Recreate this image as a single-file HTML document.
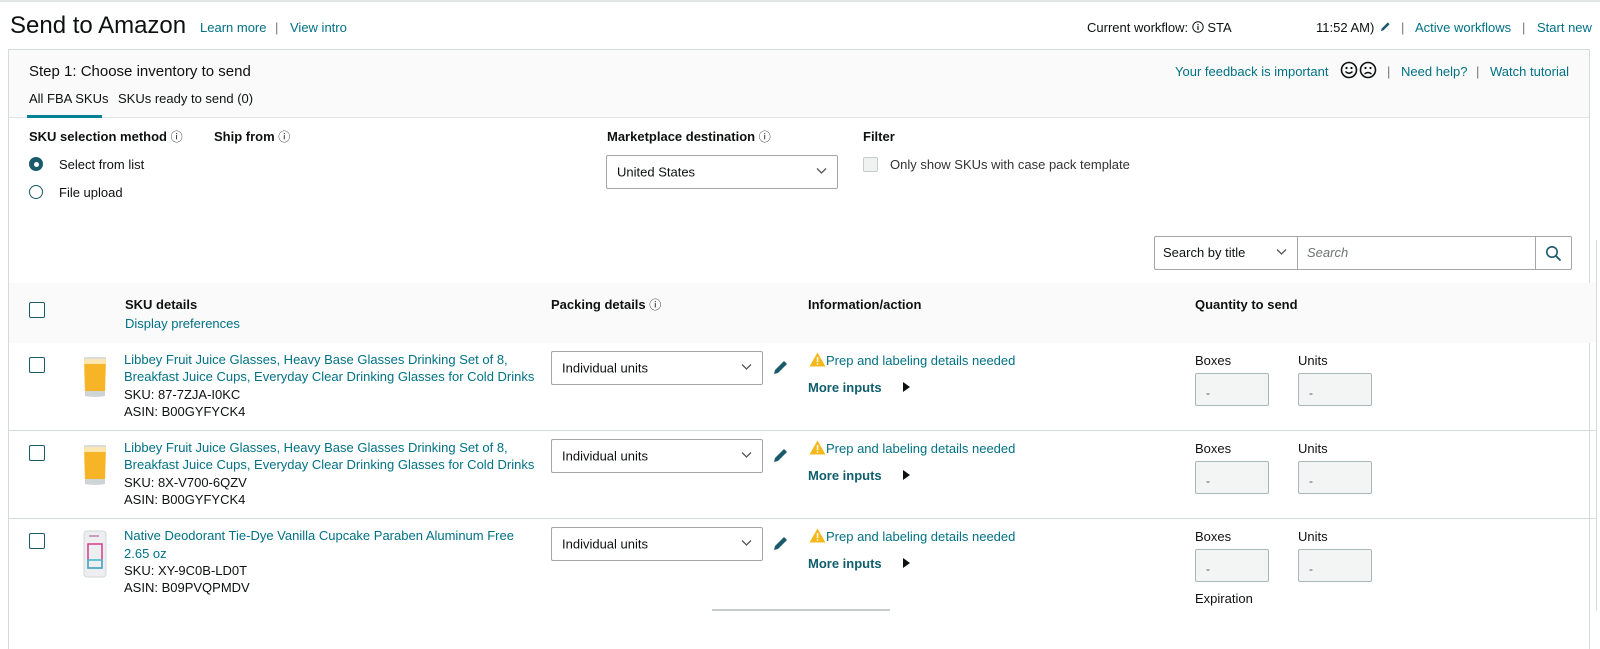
<!DOCTYPE html>
<html><head><meta charset="utf-8"><style>
*{box-sizing:border-box;margin:0;padding:0}
body{width:1600px;height:611px;overflow:hidden;background:#fff;font-family:"Liberation Sans",sans-serif;font-size:13px;color:#0f1111;position:relative}
.a{position:absolute;white-space:nowrap;line-height:1}
.l{color:#007185}
.b{font-weight:bold}
.sep{color:#767676}
.i{font-weight:normal;font-size:12px}
.cb{position:absolute;width:16px;height:16px;border:1px solid #1b5a6a;border-radius:2px;background:#fff}
.dd{position:absolute;border:1px solid #a6a6a6;background:#fff;border-radius:2px}
.dd span{position:absolute;left:10px;top:50%;transform:translateY(-50%)}
.chev{position:absolute;right:10px;top:50%;margin-top:-5px}
.inp{position:absolute;width:74px;height:33px;border:1px solid #aab7b8;background:#f3f4f4;border-radius:2px}
.inp span{position:absolute;left:10px;top:12px;color:#555;font-size:12px}
.hl{position:absolute;height:1px;background:#d5dbdb}
</style></head><body>
<div class="hl" style="left:0;top:0;width:1600px;height:2px;background:#e3e6e6"></div>

<div class="a" style="left:10px;top:14px;font-size:24px">Send to Amazon</div>
<div class="a l" style="left:200px;top:21px">Learn more</div>
<div class="a sep" style="left:275px;top:21px">|</div>
<div class="a l" style="left:290px;top:21px">View intro</div>

<div class="a" style="left:1087px;top:21px">Current workflow: <svg width="12" height="12" viewBox="0 0 12 12" style="vertical-align:-1px"><circle cx="6" cy="6" r="5.2" fill="none" stroke="#0f1111" stroke-width="1"/><rect x="5.4" y="5" width="1.2" height="4" fill="#0f1111"/><rect x="5.4" y="3" width="1.2" height="1.2" fill="#0f1111"/></svg> STA</div>
<div class="a" style="left:1316px;top:21px">11:52 AM)</div>
<svg class="a" style="left:1379px;top:20px" width="12" height="13" viewBox="0 0 12 13"><path d="M2 11 L2.6 8.6 L8.8 2.4 L10.6 4.2 L4.4 10.4 Z" fill="#1b5a6a"/></svg>
<div class="a sep" style="left:1401px;top:21px">|</div>
<div class="a l" style="left:1415px;top:21px">Active workflows</div>
<div class="a sep" style="left:1522px;top:21px">|</div>
<div class="a l" style="left:1537px;top:21px">Start new</div>

<div style="position:absolute;left:8px;top:49px;width:1582px;height:600px;border:1px solid #d5dbdb;border-bottom:none"></div>
<div style="position:absolute;left:9px;top:50px;width:1580px;height:68px;background:#fafafa;border-bottom:1px solid #e3e6e6"></div>
<div class="a" style="left:29px;top:64px;font-size:15px">Step 1: Choose inventory to send</div>
<div class="a" style="left:29px;top:92px">All FBA SKUs</div>
<div style="position:absolute;left:27px;top:115px;width:75px;height:3px;background:#008296"></div>
<div class="a" style="left:118px;top:92px">SKUs ready to send (0)</div>

<div class="a l" style="left:1175px;top:65px">Your feedback is important</div>
<svg class="a" style="left:1340px;top:61px" width="38" height="18" viewBox="0 0 38 18"><circle cx="9" cy="9" r="7.5" fill="none" stroke="#0f1111" stroke-width="1.6"/><circle cx="6.5" cy="7" r="1.1"/><circle cx="11.5" cy="7" r="1.1"/><path d="M5.5 10.5 Q9 14 12.5 10.5" fill="none" stroke="#0f1111" stroke-width="1.4"/><circle cx="28" cy="9" r="7.5" fill="none" stroke="#0f1111" stroke-width="1.6"/><circle cx="25.5" cy="7" r="1.1"/><circle cx="30.5" cy="7" r="1.1"/><path d="M24.5 13 Q28 10 31.5 13" fill="none" stroke="#0f1111" stroke-width="1.4"/></svg>
<div class="a sep" style="left:1387px;top:65px">|</div>
<div class="a l" style="left:1401px;top:65px">Need help?</div>
<div class="a sep" style="left:1476px;top:65px">|</div>
<div class="a l" style="left:1490px;top:65px">Watch tutorial</div>

<div class="a b" style="left:29px;top:130px">SKU selection method <span class="i">ⓘ</span></div>
<div class="a b" style="left:214px;top:130px">Ship from <span class="i">ⓘ</span></div>
<div class="a b" style="left:607px;top:130px">Marketplace destination <span class="i">ⓘ</span></div>
<div class="a b" style="left:863px;top:130px">Filter</div>

<div style="position:absolute;left:29px;top:157px;width:14px;height:14px;border-radius:50%;background:#1b5a6a"></div>
<div style="position:absolute;left:33.5px;top:161.5px;width:5px;height:5px;border-radius:50%;background:#fff"></div>
<div class="a" style="left:59px;top:158px">Select from list</div>
<div style="position:absolute;left:29px;top:185px;width:14px;height:14px;border-radius:50%;border:1px solid #1b5a6a"></div>
<div class="a" style="left:59px;top:186px">File upload</div>

<div class="dd" style="left:606px;top:155px;width:232px;height:34px"><span>United States</span><svg class="chev" width="11" height="8" viewBox="0 0 11 8"><path d="M1 1.5 L5.5 6 L10 1.5" fill="none" stroke="#555" stroke-width="1.3"/></svg></div>
<div style="position:absolute;left:863px;top:157px;width:15px;height:15px;border:1px solid #c6cccc;background:#f0f2f2;border-radius:2px"></div>
<div class="a" style="left:890px;top:158px;color:#333">Only show SKUs with case pack template</div>

<div style="position:absolute;left:1154px;top:236px;width:418px;height:34px;border:1px solid #a6a6a6;border-radius:2px;background:#fff"></div>
<div style="position:absolute;left:1297px;top:237px;width:1px;height:32px;background:#a6a6a6"></div>
<div style="position:absolute;left:1535px;top:237px;width:1px;height:32px;background:#a6a6a6"></div>
<div class="a" style="left:1163px;top:246px">Search by title</div>
<svg class="a" style="left:1276px;top:248px" width="11" height="8" viewBox="0 0 11 8"><path d="M1 1.5 L5.5 6 L10 1.5" fill="none" stroke="#555" stroke-width="1.3"/></svg>
<div class="a" style="left:1307px;top:246px;font-style:italic;color:#6f7373">Search</div>
<svg class="a" style="left:1545px;top:245px" width="17" height="17" viewBox="0 0 17 17"><circle cx="7" cy="7" r="5.2" fill="none" stroke="#1b5a6a" stroke-width="1.6"/><path d="M11 11 L15.5 15.5" stroke="#1b5a6a" stroke-width="1.8"/></svg>

<div style="position:absolute;left:9px;top:283px;width:1588px;height:60px;background:#fafafa"></div>
<div style="position:absolute;left:1596px;top:240px;width:1px;height:371px;background:#d5dbdb"></div>
<div class="cb" style="left:29px;top:302px"></div>
<div class="a b" style="left:125px;top:298px">SKU details</div>
<div class="a l" style="left:125px;top:317px">Display preferences</div>
<div class="a b" style="left:551px;top:298px">Packing details <span class="i">ⓘ</span></div>
<div class="a b" style="left:808px;top:298px">Information/action</div>
<div class="a b" style="left:1195px;top:298px">Quantity to send</div>

<div class="hl" style="left:9px;top:430px;width:1588px"></div>
<div class="hl" style="left:9px;top:518px;width:1588px"></div>

<div style="position:absolute;left:0;top:343px;width:1600px;height:88px">
 <div class="cb" style="left:29px;top:14px"></div>
 <svg class="a" style="left:82px;top:12px" width="26" height="44" viewBox="0 0 26 44"><path d="M2 3 L24 3 L23 38 Q13 41 3 38 Z" fill="#f6b426"/><path d="M2 3 L24 3 L23.8 9 L2.2 9 Z" fill="#fde7b0"/><path d="M3 36 L23 36 L23 41 Q13 43 3 41 Z" fill="#cfd4d6"/><rect x="2" y="2" width="22" height="2" fill="#d9dcdd"/></svg>
 <div class="a l" style="left:124px;top:10px">Libbey Fruit Juice Glasses, Heavy Base Glasses Drinking Set of 8,</div>
 <div class="a l" style="left:124px;top:27px">Breakfast Juice Cups, Everyday Clear Drinking Glasses for Cold Drinks</div>
 <div class="a" style="left:124px;top:45px">SKU: 87-7ZJA-I0KC</div>
 <div class="a" style="left:124px;top:62px">ASIN: B00GYFYCK4</div>
 <div class="dd" style="left:551px;top:8px;width:212px;height:34px"><span>Individual units</span><svg class="chev" width="11" height="8" viewBox="0 0 11 8"><path d="M1 1.5 L5.5 6 L10 1.5" fill="none" stroke="#555" stroke-width="1.3"/></svg></div>
 <svg class="a" style="left:772px;top:15px" width="16" height="18" viewBox="0 0 16 18"><path d="M2 16 L3 12 L12 3 L15 6 L6 15 Z" fill="#1b5a6a"/></svg>
 <svg class="a" style="left:809px;top:9px" width="17" height="15" viewBox="0 0 17 15"><path d="M8.5 0.5 L16.5 14.5 L0.5 14.5 Z" fill="#f5b81c"/><rect x="7.8" y="5" width="1.5" height="5" fill="#fff"/><rect x="7.8" y="11.2" width="1.5" height="1.5" fill="#fff"/></svg>
 <div class="a l" style="left:826px;top:11px">Prep and labeling details needed</div>
 <div class="a b" style="left:808px;top:38px;color:#0f5e6e">More inputs</div>
 <svg class="a" style="left:903px;top:39px" width="7" height="10" viewBox="0 0 7 10"><path d="M0 0 L7 5 L0 10 Z" fill="#0f1111"/></svg>
 <div class="a" style="left:1195px;top:11px">Boxes</div>
 <div class="a" style="left:1298px;top:11px">Units</div>
 <div class="inp" style="left:1195px;top:30px"><span>-</span></div>
 <div class="inp" style="left:1298px;top:30px"><span>-</span></div>
</div>

<div style="position:absolute;left:0;top:431px;width:1600px;height:88px">
 <div class="cb" style="left:29px;top:14px"></div>
 <svg class="a" style="left:82px;top:12px" width="26" height="44" viewBox="0 0 26 44"><path d="M2 3 L24 3 L23 38 Q13 41 3 38 Z" fill="#f6b426"/><path d="M2 3 L24 3 L23.8 9 L2.2 9 Z" fill="#fde7b0"/><path d="M3 36 L23 36 L23 41 Q13 43 3 41 Z" fill="#cfd4d6"/><rect x="2" y="2" width="22" height="2" fill="#d9dcdd"/></svg>
 <div class="a l" style="left:124px;top:10px">Libbey Fruit Juice Glasses, Heavy Base Glasses Drinking Set of 8,</div>
 <div class="a l" style="left:124px;top:27px">Breakfast Juice Cups, Everyday Clear Drinking Glasses for Cold Drinks</div>
 <div class="a" style="left:124px;top:45px">SKU: 8X-V700-6QZV</div>
 <div class="a" style="left:124px;top:62px">ASIN: B00GYFYCK4</div>
 <div class="dd" style="left:551px;top:8px;width:212px;height:34px"><span>Individual units</span><svg class="chev" width="11" height="8" viewBox="0 0 11 8"><path d="M1 1.5 L5.5 6 L10 1.5" fill="none" stroke="#555" stroke-width="1.3"/></svg></div>
 <svg class="a" style="left:772px;top:15px" width="16" height="18" viewBox="0 0 16 18"><path d="M2 16 L3 12 L12 3 L15 6 L6 15 Z" fill="#1b5a6a"/></svg>
 <svg class="a" style="left:809px;top:9px" width="17" height="15" viewBox="0 0 17 15"><path d="M8.5 0.5 L16.5 14.5 L0.5 14.5 Z" fill="#f5b81c"/><rect x="7.8" y="5" width="1.5" height="5" fill="#fff"/><rect x="7.8" y="11.2" width="1.5" height="1.5" fill="#fff"/></svg>
 <div class="a l" style="left:826px;top:11px">Prep and labeling details needed</div>
 <div class="a b" style="left:808px;top:38px;color:#0f5e6e">More inputs</div>
 <svg class="a" style="left:903px;top:39px" width="7" height="10" viewBox="0 0 7 10"><path d="M0 0 L7 5 L0 10 Z" fill="#0f1111"/></svg>
 <div class="a" style="left:1195px;top:11px">Boxes</div>
 <div class="a" style="left:1298px;top:11px">Units</div>
 <div class="inp" style="left:1195px;top:30px"><span>-</span></div>
 <div class="inp" style="left:1298px;top:30px"><span>-</span></div>
</div>

<div style="position:absolute;left:0;top:519px;width:1600px;height:92px">
 <div class="cb" style="left:29px;top:14px"></div>
 <svg class="a" style="left:82px;top:11px" width="26" height="48" viewBox="0 0 26 48"><rect x="2" y="1" width="22" height="46" rx="3" fill="#eceef0" stroke="#d5d8da"/><rect x="6" y="14" width="14" height="24" fill="none" stroke="#d9388a" stroke-width="1.5"/><rect x="6" y="30" width="14" height="8" fill="none" stroke="#3cb6c9" stroke-width="1.5"/><rect x="7" y="5" width="10" height="2" fill="#c9a0c0"/></svg>
 <div class="a l" style="left:124px;top:10px">Native Deodorant Tie-Dye Vanilla Cupcake Paraben Aluminum Free</div>
 <div class="a l" style="left:124px;top:28px">2.65 oz</div>
 <div class="a" style="left:124px;top:45px">SKU: XY-9C0B-LD0T</div>
 <div class="a" style="left:124px;top:62px">ASIN: B09PVQPMDV</div>
 <div class="dd" style="left:551px;top:8px;width:212px;height:34px"><span>Individual units</span><svg class="chev" width="11" height="8" viewBox="0 0 11 8"><path d="M1 1.5 L5.5 6 L10 1.5" fill="none" stroke="#555" stroke-width="1.3"/></svg></div>
 <svg class="a" style="left:772px;top:15px" width="16" height="18" viewBox="0 0 16 18"><path d="M2 16 L3 12 L12 3 L15 6 L6 15 Z" fill="#1b5a6a"/></svg>
 <svg class="a" style="left:809px;top:9px" width="17" height="15" viewBox="0 0 17 15"><path d="M8.5 0.5 L16.5 14.5 L0.5 14.5 Z" fill="#f5b81c"/><rect x="7.8" y="5" width="1.5" height="5" fill="#fff"/><rect x="7.8" y="11.2" width="1.5" height="1.5" fill="#fff"/></svg>
 <div class="a l" style="left:826px;top:11px">Prep and labeling details needed</div>
 <div class="a b" style="left:808px;top:38px;color:#0f5e6e">More inputs</div>
 <svg class="a" style="left:903px;top:39px" width="7" height="10" viewBox="0 0 7 10"><path d="M0 0 L7 5 L0 10 Z" fill="#0f1111"/></svg>
 <div class="a" style="left:1195px;top:11px">Boxes</div>
 <div class="a" style="left:1298px;top:11px">Units</div>
 <div class="inp" style="left:1195px;top:30px"><span>-</span></div>
 <div class="inp" style="left:1298px;top:30px"><span>-</span></div>
 <div class="a" style="left:1195px;top:73px">Expiration</div>
 <div style="position:absolute;left:712px;top:90px;width:178px;height:2px;background:#c6cccc"></div>
</div>
</body></html>
